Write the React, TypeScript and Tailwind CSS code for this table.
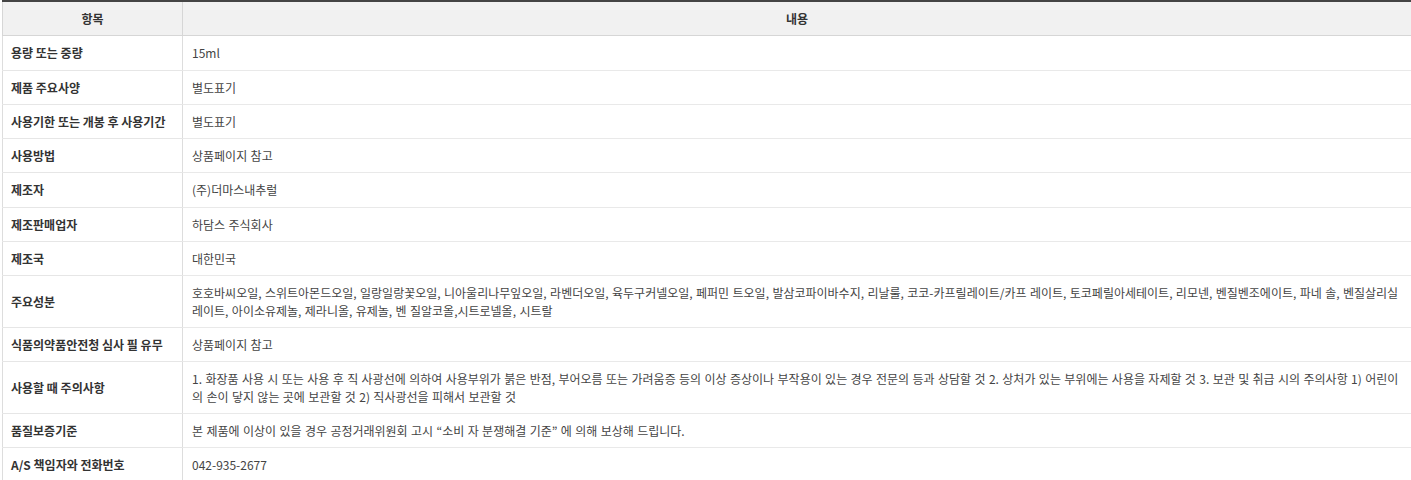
import React from 'react';

const ROWS: { label: string; value: string }[] = [
  { label: '용량 또는 중량', value: '15ml' },
  { label: '제품 주요사양', value: '별도표기' },
  { label: '사용기한 또는 개봉 후 사용기간', value: '별도표기' },
  { label: '사용방법', value: '상품페이지 참고' },
  { label: '제조자', value: '(주)더마스내추럴' },
  { label: '제조판매업자', value: '하담스 주식회사' },
  { label: '제조국', value: '대한민국' },
  {
    label: '주요성분',
    value:
      '호호바씨오일, 스위트아몬드오일, 일랑일랑꽃오일, 니아울리나무잎오일, 라벤더오일, 육두구커넬오일, 페퍼민 트오일, 발삼코파이바수지, 리날룰, 코코-카프릴레이트/카프 레이트, 토코페릴아세테이트, 리모넨, 벤질벤조에이트, 파네 솔, 벤질살리실레이트, 아이소유제놀, 제라니올, 유제놀, 벤 질알코올,시트로넬올, 시트랄',
  },
  { label: '식품의약품안전청 심사 필 유무', value: '상품페이지 참고' },
  {
    label: '사용할 때 주의사항',
    value:
      '1. 화장품 사용 시 또는 사용 후 직 사광선에 의하여 사용부위가 붉은 반점, 부어오름 또는 가려움증 등의 이상 증상이나 부작용이 있는 경우 전문의 등과 상담할 것 2. 상처가 있는 부위에는 사용을 자제할 것 3. 보관 및 취급 시의 주의사항 1) 어린이의 손이 닿지 않는 곳에 보관할 것 2) 직사광선을 피해서 보관할 것',
  },
  { label: '품질보증기준', value: '본 제품에 이상이 있을 경우 공정거래위원회 고시 “소비 자 분쟁해결 기준” 에 의해 보상해 드립니다.' },
  { label: 'A/S 책임자와 전화번호', value: '042-935-2677' },
];

export default function App() {
  return (
    <div
      className="bg-white pl-[2px] text-[12px] leading-[17.3px] text-[#333]"
      style={{ fontFamily: '"Noto Sans CJK KR", "Noto Sans", sans-serif' }}
    >
      <table className="w-full table-fixed border-collapse border-t-2 border-t-[#444]">
        <colgroup>
          <col className="w-[180px]" />
          <col />
        </colgroup>
        <thead>
          <tr className="bg-[#f1f1f1]">
            <th className="border-b border-l border-r border-[#d6d6d6] py-[8px] text-center font-bold">항목</th>
            <th className="border-b border-[#d6d6d6] py-[8px] text-center font-bold">내용</th>
          </tr>
        </thead>
        <tbody>
          {ROWS.map((row) => (
            <tr key={row.label}>
              <td className="border-b border-l border-r border-[#dddddd] border-b-[#e6e6e6] py-[8px] pl-[8px] pr-[6px] align-middle font-bold text-[#333]">
                {row.label}
              </td>
              <td className="border-b border-[#e9e9e9] py-[8px] pl-[9px] pr-[9px] align-middle text-[#444] [word-spacing:0.7px]">
                {row.value}
              </td>
            </tr>
          ))}
        </tbody>
      </table>
    </div>
  );
}
